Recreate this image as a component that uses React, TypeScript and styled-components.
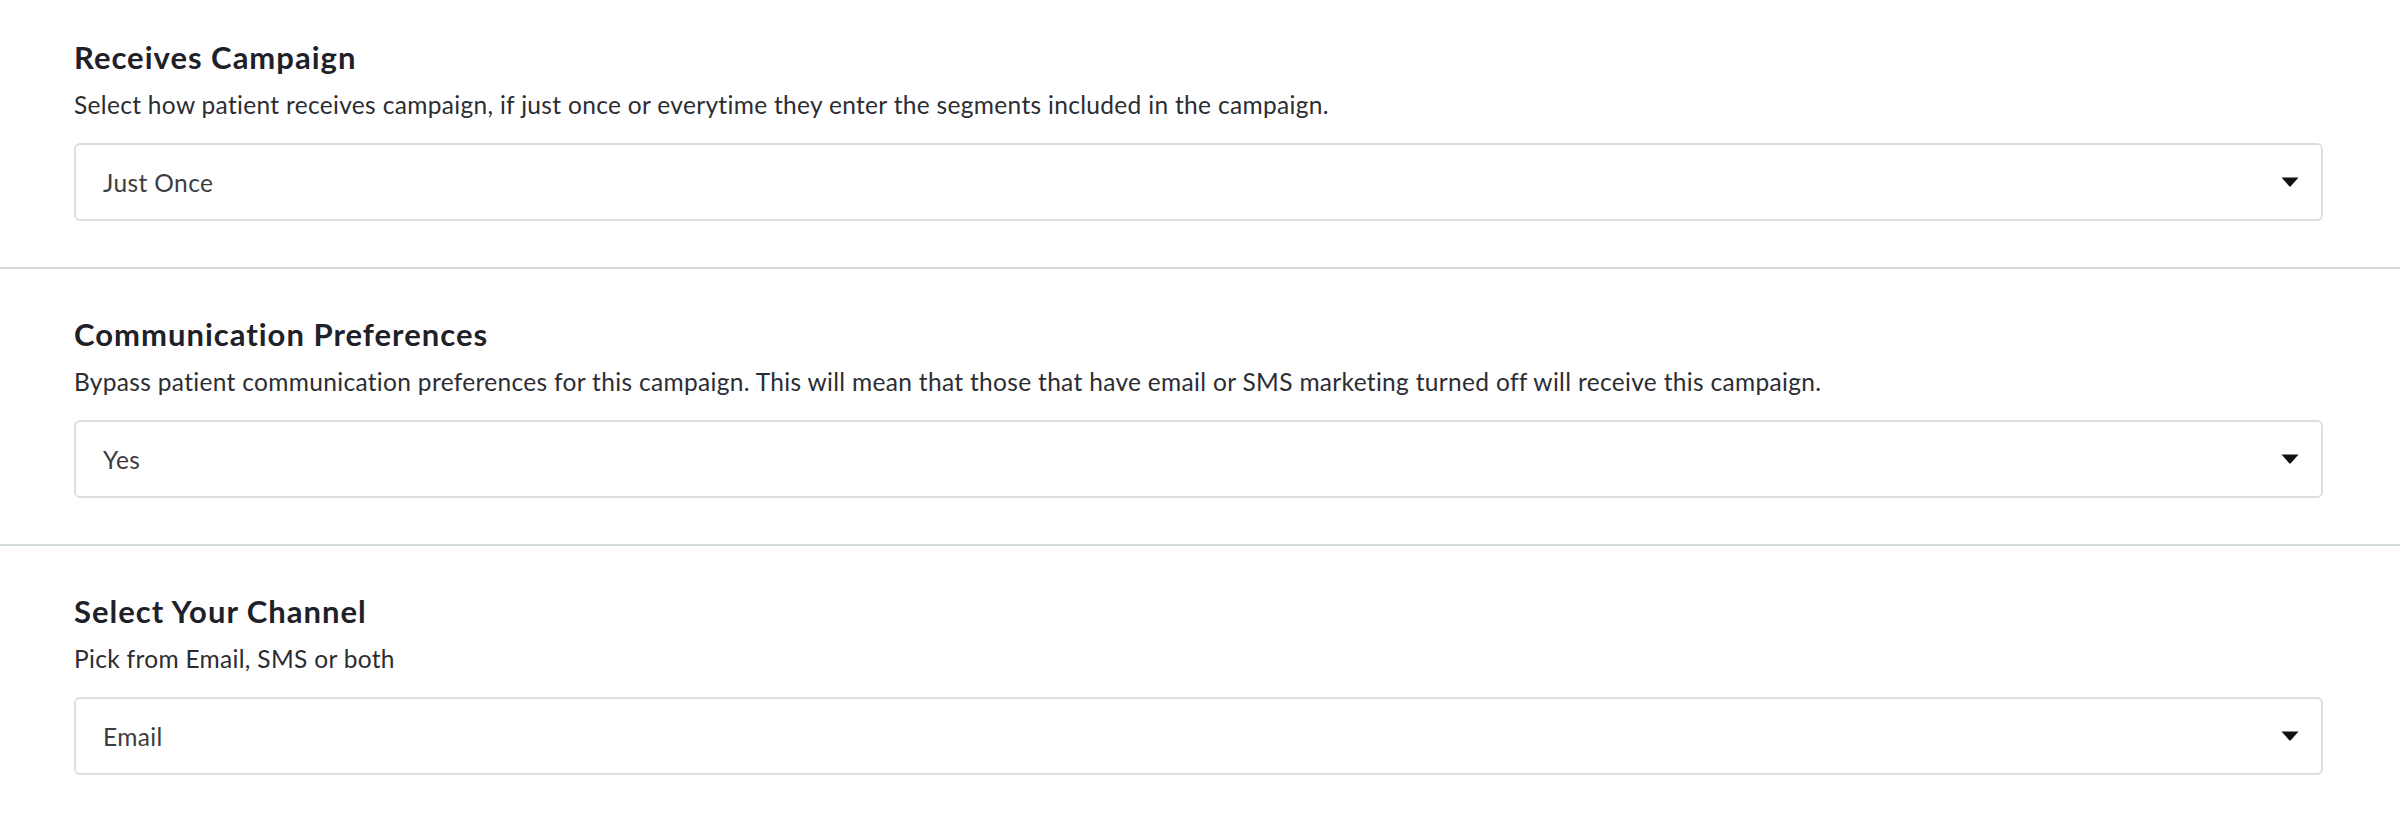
import React from "react";
import styled, { createGlobalStyle } from "styled-components";

type Setting = {
  id: string;
  title: string;
  description: string;
  value: string;
};

const settings: Setting[] = [
  {
    id: "receives",
    title: "Receives Campaign",
    description:
      "Select how patient receives campaign, if just once or everytime they enter the segments included in the campaign.",
    value: "Just Once",
  },
  {
    id: "preferences",
    title: "Communication Preferences",
    description:
      "Bypass patient communication preferences for this campaign. This will mean that those that have email or SMS marketing turned off will receive this campaign.",
    value: "Yes",
  },
  {
    id: "channel",
    title: "Select Your Channel",
    description: "Pick from Email, SMS or both",
    value: "Email",
  },
];

const GlobalStyle = createGlobalStyle`
  body {
    margin: 0;
    background: #fff;
    font-family: Lato, "Open Sans", Arial, sans-serif;
  }
`;

const Page = styled.div`
  display: flex;
  flex-direction: column;
`;

const Section = styled.section<{ $first?: boolean }>`
  padding: ${(p) => (p.$first ? "39px" : "47px")} 77px 46px 74px;
  border-bottom: 2px solid #d3dbdb;

  &:last-child {
    border-bottom: none;
  }
`;

const Title = styled.h3`
  margin: 0;
  font-size: 31px;
  line-height: 36px;
  font-weight: 700;
  letter-spacing: 1px;
  color: #1f2129;
`;

const Description = styled.p`
  margin: 14px 0 22px;
  font-size: 24.5px;
  line-height: 32px;
  letter-spacing: 0.32px;
  color: #2b2d33;
`;

const Dropdown = styled.div`
  display: flex;
  align-items: center;
  justify-content: space-between;
  box-sizing: border-box;
  height: 78px;
  padding: 0 22px 0 27px;
  border: 2px solid #dedede;
  border-radius: 6px;
  background: #fff;
  cursor: pointer;
`;

const Value = styled.span`
  font-size: 24.5px;
  letter-spacing: 0.4px;
  color: #3d3d3f;
`;

const Caret = () => (
  <svg width="18" height="10" viewBox="0 0 18 10" aria-hidden="true">
    <path d="M0.5 0.5 H17.5 L9.8 9.2 Q9 10 8.2 9.2 Z" fill="#111" />
  </svg>
);

const App = () => {
  return (
    <Page>
      <GlobalStyle />
      {settings.map((setting, index) => (
        <Section key={setting.id} $first={index === 0}>
          <Title>{setting.title}</Title>
          <Description>{setting.description}</Description>
          <Dropdown role="combobox" aria-expanded="false">
            <Value>{setting.value}</Value>
            <Caret />
          </Dropdown>
        </Section>
      ))}
    </Page>
  );
};

export default App;
